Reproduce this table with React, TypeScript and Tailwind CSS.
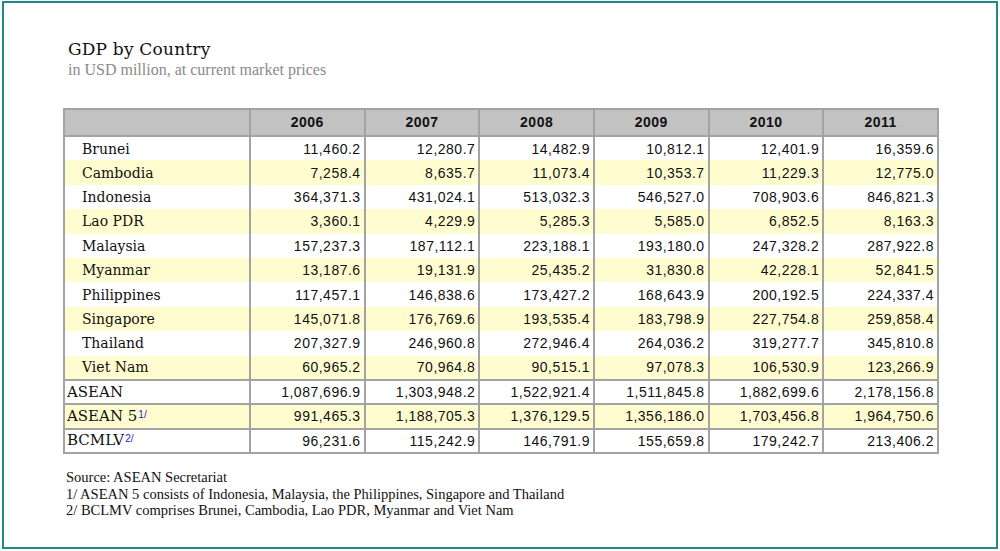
const years = ["2006", "2007", "2008", "2009", "2010", "2011"];

const countries: [string, string[]][] = [
  ["Brunei", ["11,460.2", "12,280.7", "14,482.9", "10,812.1", "12,401.9", "16,359.6"]],
  ["Cambodia", ["7,258.4", "8,635.7", "11,073.4", "10,353.7", "11,229.3", "12,775.0"]],
  ["Indonesia", ["364,371.3", "431,024.1", "513,032.3", "546,527.0", "708,903.6", "846,821.3"]],
  ["Lao PDR", ["3,360.1", "4,229.9", "5,285.3", "5,585.0", "6,852.5", "8,163.3"]],
  ["Malaysia", ["157,237.3", "187,112.1", "223,188.1", "193,180.0", "247,328.2", "287,922.8"]],
  ["Myanmar", ["13,187.6", "19,131.9", "25,435.2", "31,830.8", "42,228.1", "52,841.5"]],
  ["Philippines", ["117,457.1", "146,838.6", "173,427.2", "168,643.9", "200,192.5", "224,337.4"]],
  ["Singapore", ["145,071.8", "176,769.6", "193,535.4", "183,798.9", "227,754.8", "259,858.4"]],
  ["Thailand", ["207,327.9", "246,960.8", "272,946.4", "264,036.2", "319,277.7", "345,810.8"]],
  ["Viet Nam", ["60,965.2", "70,964.8", "90,515.1", "97,078.3", "106,530.9", "123,266.9"]],
];

const totals: [string, string, string[]][] = [
  ["ASEAN", "", ["1,087,696.9", "1,303,948.2", "1,522,921.4", "1,511,845.8", "1,882,699.6", "2,178,156.8"]],
  ["ASEAN 5", "1/", ["991,465.3", "1,188,705.3", "1,376,129.5", "1,356,186.0", "1,703,456.8", "1,964,750.6"]],
  ["BCMLV", "2/", ["96,231.6", "115,242.9", "146,791.9", "155,659.8", "179,242.7", "213,406.2"]],
];

const serif = "font-['DejaVu_Serif','Liberation_Serif',serif]";
const lserif = "font-['Liberation_Serif','Times_New_Roman',serif]";
const sans = "font-['Liberation_Sans',Arial,sans-serif]";

export default function App() {
  return (
    <div className="w-[1000px] h-[551px] bg-white pt-px pl-[2px]">
      <div className="w-[996px] h-[548px] border-2 border-[#22898a] pl-[64px] pt-[35px]">
        <h1 className={`${serif} text-[17px] leading-[22px] text-[#111] tracking-[0.2px]`}>GDP by Country</h1>
        <p className={`${lserif} text-[16px] leading-[20px] text-[#8a8a8a]`}>
          in USD million, at current market prices
        </p>

        <table className="mt-[28px] -ml-[5px] border-collapse border-2 border-[#a3a3a3] table-fixed">
          <colgroup>
            <col className="w-[186px]" />
            {years.map((y) => (
              <col key={y} className="w-[114.67px]" />
            ))}
          </colgroup>
          <thead>
            <tr className="bg-[#c2c2c2] h-[27px]">
              <th className="border-2 border-[#a3a3a3]" />
              {years.map((y) => (
                <th
                  key={y}
                  className={`${sans} border-2 border-[#a3a3a3] text-[14px] font-bold text-[#111] tracking-[0.5px] text-center`}
                >
                  {y}
                </th>
              ))}
            </tr>
          </thead>
          <tbody>
            {countries.map(([name, vals], i) => (
              <tr key={name} className={`h-[24.4px] ${i % 2 === 1 ? "bg-[#fffdd0]" : "bg-white"}`}>
                <td className={`${serif} border-x-2 border-[#a3a3a3] pl-[17px] text-[14px] text-[#111] leading-none`}>
                  {name}
                </td>
                {vals.map((v, j) => (
                  <td
                    key={j}
                    className={`${sans} border-x-2 border-[#a3a3a3] pr-[3px] text-right text-[14px] tracking-[0.5px] text-[#111] leading-none`}
                  >
                    {v}
                  </td>
                ))}
              </tr>
            ))}
            {totals.map(([name, sup, vals], i) => (
              <tr key={name} className={`h-[24.4px] ${i === 1 ? "bg-[#fffdd0]" : "bg-white"}`}>
                <td className={`${serif} border-2 border-[#a3a3a3] pl-[2px] text-[15px] text-[#111] leading-none`}>
                  {name}
                  {sup && (
                    <sup className={`${sans} text-[10px] text-[#1a1ad8] ml-px relative -top-[3px]`}>{sup}</sup>
                  )}
                </td>
                {vals.map((v, j) => (
                  <td
                    key={j}
                    className={`${sans} border-2 border-[#a3a3a3] pr-[3px] text-right text-[14px] tracking-[0.5px] text-[#111] leading-none`}
                  >
                    {v}
                  </td>
                ))}
              </tr>
            ))}
          </tbody>
        </table>

        <div className={`${lserif} mt-[15px] -ml-[2px] text-[14.5px] leading-[16.5px] text-[#111]`}>
          <p>Source: ASEAN Secretariat</p>
          <p>1/ ASEAN 5 consists of Indonesia, Malaysia, the Philippines, Singapore and Thailand</p>
          <p>2/ BCLMV comprises Brunei, Cambodia, Lao PDR, Myanmar and Viet Nam</p>
        </div>
      </div>
    </div>
  );
}
